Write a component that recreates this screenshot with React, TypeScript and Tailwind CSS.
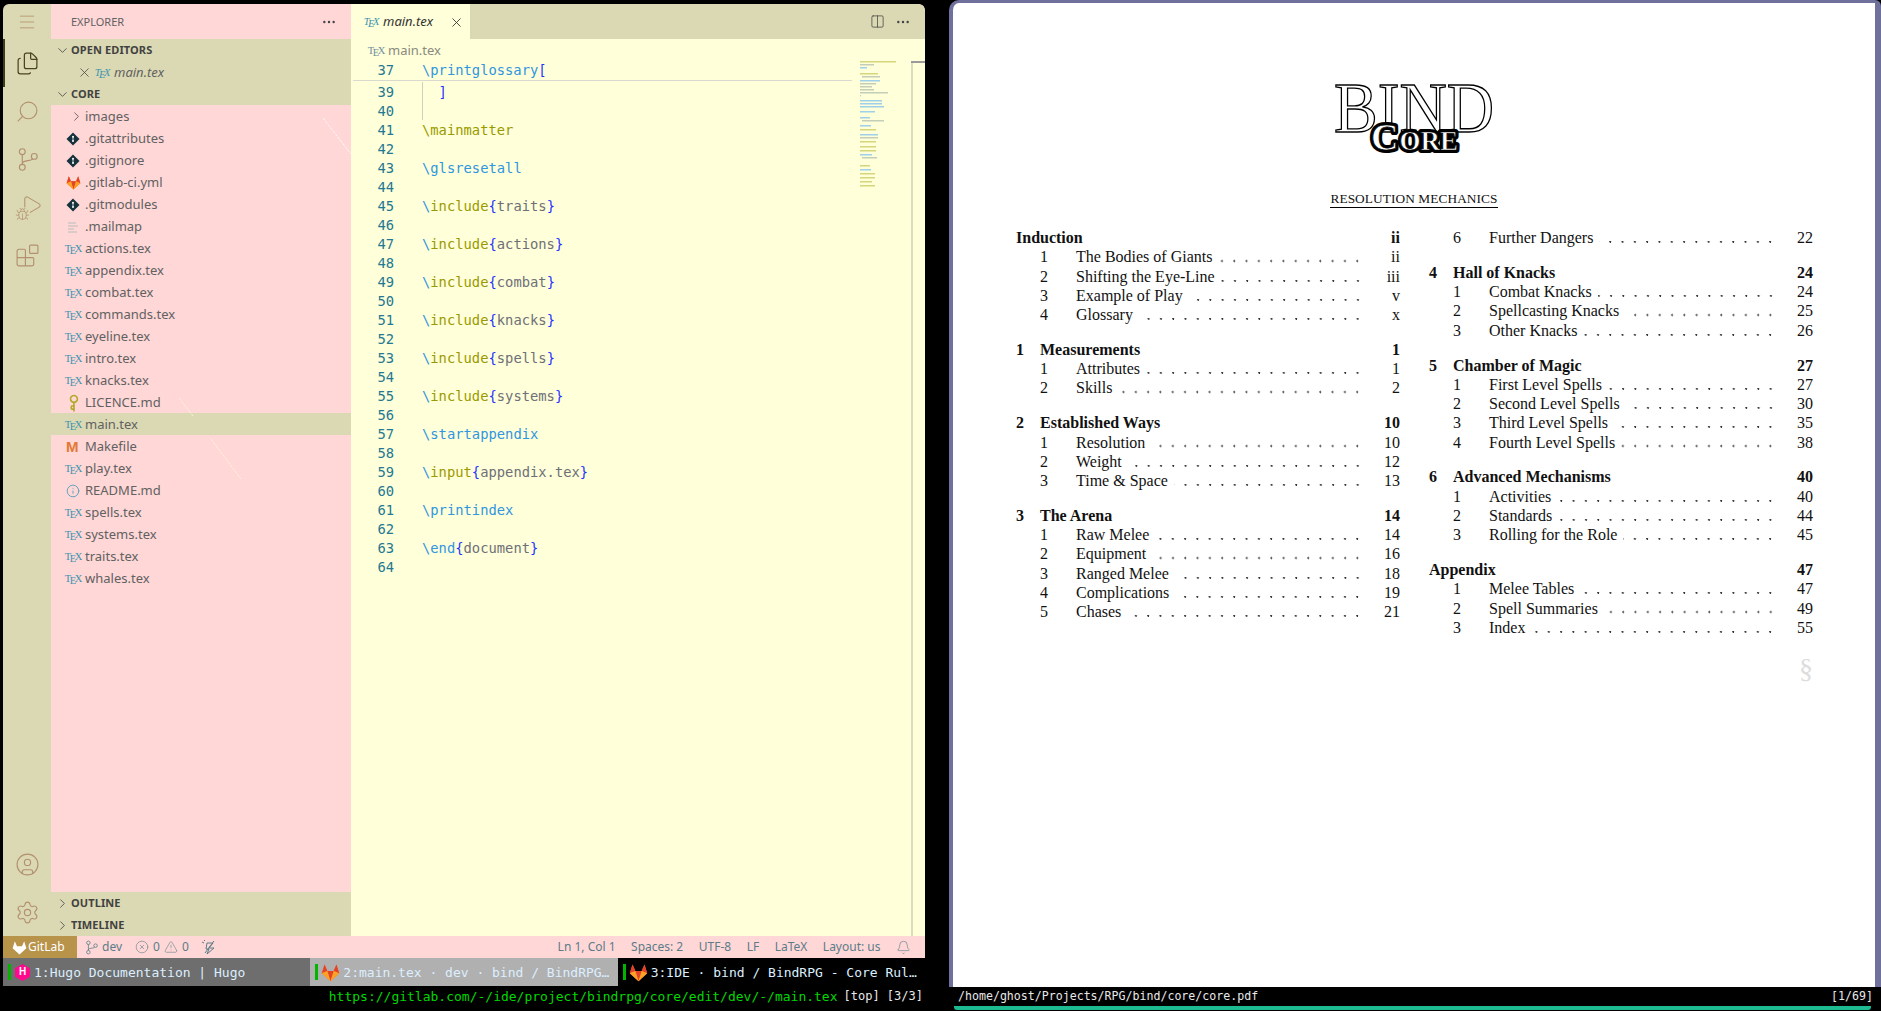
import React from "react";
import { Files, Search, Blocks, CircleUser, Settings, Menu, ChevronDown, ChevronRight, X, Columns2, MoreHorizontal, Bell, CircleX, TriangleAlert, Info, Play, Bug, Key } from "lucide-react";

const Tex = ({ dim }: { dim?: boolean }) => (
  <span className={`inline-flex w-[15px] shrink-0 items-start justify-center font-['Liberation_Serif',serif] text-[10.5px] leading-[10px] ${dim ? "text-[#6f8f9e]" : "text-[#3c93b0]"}`}>
    <span>T</span><span className="relative top-[2px] -mx-[1.5px]">E</span><span>X</span>
  </span>
);

const Fox = ({ s = 18, white }: { s?: number; white?: boolean }) => (
  <svg width={s} height={s} viewBox="0 0 24 24" className="shrink-0">
    <polygon points="12,23 1,13 4.5,2 8,10 16,10 19.5,2 23,13" fill={white ? "#fff" : "#fc6d26"} />
    {!white && <polygon points="12,23 8,10 16,10" fill="#e24329" />}
    {!white && <polygon points="1,13 4.5,2 8,10" fill="#e24329" />}
    {!white && <polygon points="23,13 19.5,2 16,10" fill="#e24329" />}
    {!white && <polygon points="1,13 8,10 12,23" fill="#fca326" />}
    {!white && <polygon points="23,13 16,10 12,23" fill="#fca326" />}
  </svg>
);

const BranchIcon = ({ size = 25, sw = 1.1, className = "" }: { size?: number; sw?: number; className?: string }) => (
  <svg width={size} height={size} viewBox="0 0 24 24" fill="none" stroke="currentColor" strokeWidth={sw} className={className}>
    <circle cx="7" cy="4.5" r="2.8" />
    <circle cx="7" cy="19.5" r="2.8" />
    <circle cx="18.5" cy="9" r="2.8" />
    <path d="M7 7.3v9.4M7 16c0-4 9-2 10-4.6" />
  </svg>
);

const GitIcon = () => (
  <svg width="14" height="14" viewBox="0 0 14 14" className="shrink-0">
    <rect x="2.4" y="2.4" width="9.2" height="9.2" transform="rotate(45 7 7)" fill="#16323c" />
    <circle cx="7" cy="4.8" r="1" fill="#fff" />
    <circle cx="7" cy="9" r="1" fill="#fff" />
    <path d="M7 5v4" stroke="#fff" strokeWidth="0.8" />
  </svg>
);

const MailIcon = () => (
  <svg width="14" height="14" viewBox="0 0 14 14" className="shrink-0">
    <path d="M2 3h8M2 6h10M2 9h6M2 12h9" stroke="#b9bdb9" strokeWidth="1" />
  </svg>
);

type F = { n: string; k: "tex" | "git" | "fox" | "mail" | "key" | "make" | "info" | "dir"; sel?: boolean };
const files: F[] = [
  { n: "images", k: "dir" },
  { n: ".gitattributes", k: "git" },
  { n: ".gitignore", k: "git" },
  { n: ".gitlab-ci.yml", k: "fox" },
  { n: ".gitmodules", k: "git" },
  { n: ".mailmap", k: "mail" },
  { n: "actions.tex", k: "tex" },
  { n: "appendix.tex", k: "tex" },
  { n: "combat.tex", k: "tex" },
  { n: "commands.tex", k: "tex" },
  { n: "eyeline.tex", k: "tex" },
  { n: "intro.tex", k: "tex" },
  { n: "knacks.tex", k: "tex" },
  { n: "LICENCE.md", k: "key" },
  { n: "main.tex", k: "tex", sel: true },
  { n: "Makefile", k: "make" },
  { n: "play.tex", k: "tex" },
  { n: "README.md", k: "info" },
  { n: "spells.tex", k: "tex" },
  { n: "systems.tex", k: "tex" },
  { n: "traits.tex", k: "tex" },
  { n: "whales.tex", k: "tex" },
];

const FileIcon = ({ k }: { k: F["k"] }) => {
  if (k === "tex") return <Tex />;
  if (k === "git") return <GitIcon />;
  if (k === "fox") return <Fox s={15} />;
  if (k === "mail") return <MailIcon />;
  if (k === "key") return <Key size={15} strokeWidth={2.6} className="shrink-0 rotate-[135deg] text-[#b0ab2c]" />;
  if (k === "make") return <span className="w-[14px] shrink-0 font-['Liberation_Sans',sans-serif] text-[15px] font-bold leading-none text-[#e37933]">M</span>;
  if (k === "info") return <Info size={14} strokeWidth={1.5} className="shrink-0 text-[#519aba]" />;
  return <ChevronRight size={15} strokeWidth={1.2} className="ml-[3px] shrink-0 text-[#424242]" />;
};

const iconTan = "text-[#b3906e]";

const ActivityBar = () => (
  <div className="flex w-[48px] shrink-0 flex-col bg-[#dbd9b3]">
    <div className="flex h-[35px] shrink-0 items-center justify-center">
      <Menu size={20} strokeWidth={1} className={iconTan} />
    </div>
    <div className="flex h-[48px] items-center justify-center border-l-2 border-[#3d3d1c] pr-[2px]">
      <Files size={25} strokeWidth={1.2} className="text-[#4a4420]" />
    </div>
    <div className="flex h-[48px] items-center justify-center">
      <Search size={25} strokeWidth={1.1} className={`${iconTan} -scale-x-100`} />
    </div>
    <div className="flex h-[48px] items-center justify-center">
      <BranchIcon className={iconTan} />
    </div>
    <div className="relative flex h-[48px] items-center justify-center">
      <Play size={23} strokeWidth={1.1} className={`${iconTan} ml-[8px] -mt-[4px]`} />
      <Bug size={15} strokeWidth={1.2} className={`${iconTan} absolute left-[12px] top-[24px] rounded-full bg-[#dbd9b3]`} />
    </div>
    <div className="flex h-[48px] items-center justify-center">
      <Blocks size={25} strokeWidth={1.1} className={iconTan} />
    </div>
    <div className="flex-1" />
    <div className="flex h-[48px] items-center justify-center">
      <CircleUser size={25} strokeWidth={1.1} className={iconTan} />
    </div>
    <div className="flex h-[48px] items-center justify-center">
      <Settings size={25} strokeWidth={1.1} className={iconTan} />
    </div>
  </div>
);

const SectionHead = ({ t, open }: { t: string; open?: boolean }) => (
  <div className="flex h-[22px] shrink-0 items-center gap-[1px] bg-[#dbd9b3] pl-[4px] text-[11px] font-bold tracking-[0.1px] text-[#424242]">
    {open ? <ChevronDown size={15} strokeWidth={1.3} className="shrink-0" /> : <ChevronRight size={15} strokeWidth={1.3} className="shrink-0" />}
    <span>{t}</span>
  </div>
);

const SideBar = () => (
  <div className="relative flex w-[300px] shrink-0 flex-col bg-[#ffd7d7] font-['Noto_Sans',sans-serif]">
    <div className="flex h-[35px] shrink-0 items-center justify-between pl-[20px] pr-[14px] pt-[1px] text-[11px] text-[#616161]">
      <span>EXPLORER</span>
      <MoreHorizontal size={16} strokeWidth={1.6} className="text-[#424242]" />
    </div>
    <SectionHead t="OPEN EDITORS" open />
    <div className="flex h-[22px] shrink-0 items-center bg-[#dbd9b3] pl-[26px] pt-[1px] text-[13px] italic text-[#616161]">
      <X size={15} strokeWidth={1.2} className="mr-[3px] shrink-0 text-[#424242]" />
      <Tex />
      <span className="ml-[4px]">main.tex</span>
    </div>
    <SectionHead t="CORE" open />
    <div className="flex-1">
      {files.map((f) => (
        <div key={f.n} className={`flex h-[22px] items-center pl-[15px] pt-[1px] text-[13px] text-[#616161] ${f.sel ? "bg-[#dbd9b3]" : ""}`}>
          <span className="flex w-[19px] shrink-0 items-center"><FileIcon k={f.k} /></span>
          <span>{f.n}</span>
        </div>
      ))}
    </div>
    <SectionHead t="OUTLINE" />
    <SectionHead t="TIMELINE" />
    <svg width="300" height="400" className="pointer-events-none absolute left-0 top-[100px]">
      <path d="M272 14L300 50" stroke="#fff" strokeWidth="0.8" strokeDasharray="3 1" />
      <path d="M128 294L142 312M160 335L190 375" stroke="#fff8d8" strokeWidth="0.8" strokeDasharray="3 1" />
    </svg>
  </div>
);

const c = {
  cmd: "text-[#2f96e0]",
  olive: "text-[#9a9a00]",
  br: "text-[#1f35ff]",
  arg: "text-[#6e7078]",
};

const Inc = ({ cmd, arg, col = "olive" }: { cmd: string; arg: string; col?: "olive" | "cmd" }) => (
  <>
    <span className={c.cmd}>\</span>
    <span className={c[col]}>{cmd}</span>
    <span className={c.br}>{"{"}</span>
    <span className={c.arg}>{arg}</span>
    <span className={c.br}>{"}"}</span>
  </>
);

const Cmd = ({ t, olive }: { t: string; olive?: boolean }) => (
  <span className={olive ? c.olive : c.cmd}>\{t}</span>
);

const code: Record<number, React.ReactNode> = {
  39: <span className={`${c.br} ml-[16.6px]`}>]</span>,
  41: <Cmd t="mainmatter" olive />,
  43: <Cmd t="glsresetall" />,
  45: <Inc cmd="include" arg="traits" />,
  47: <Inc cmd="include" arg="actions" />,
  49: <Inc cmd="include" arg="combat" />,
  51: <Inc cmd="include" arg="knacks" />,
  53: <Inc cmd="include" arg="spells" />,
  55: <Inc cmd="include" arg="systems" />,
  57: <Cmd t="startappendix" />,
  59: <Inc cmd="input" arg="appendix.tex" />,
  61: <Cmd t="printindex" />,
  63: <Inc cmd="end" arg="document" col="cmd" />,
};

const lineNos = Array.from({ length: 26 }, (_, i) => 39 + i);

const O = "#d5d57e";
const B = "#9ed0ea";
const G = "#c4cdb8";
const mini: [number, number, number, string][] = [
  [61, 0, 36, O], [64, 0, 14, G], [67, 0, 7, B],
  [73, 0, 18, O], [76, 2, 18, G], [80, 0, 20, B], [83, 0, 16, G], [86, 0, 12, G],
  [89, 0, 14, G], [92, 0, 28, G], [95, 0, 1, G],
  [100, 0, 22, B], [103, 0, 22, B], [106, 0, 24, B], [111, 0, 15, B], [117, 0, 10, B], [120, 2, 22, G],
  [125, 0, 11, B], [129, 0, 16, O], [134, 0, 18, B], [137, 0, 18, G], [141, 0, 16, O], [146, 0, 16, O], [150, 0, 16, O],
  [154, 0, 12, B], [157, 2, 15, G], [165, 0, 10, O], [169, 0, 11, B],
  [173, 0, 15, O], [177, 0, 15, O], [181, 0, 12, O], [185, 0, 15, O],
];

const Minimap = () => (
  <svg width="40" height="150" className="absolute left-[509px] top-[51px]">
    {mini.map(([y, x, w, col], i) => (
      <rect key={i} x={x} y={y - 55} width={w} height="1.5" fill={col} />
    ))}
  </svg>
);

const Editor = () => (
  <div className="relative flex min-w-0 flex-1 flex-col overflow-hidden rounded-tr-[6px] bg-[#ffffd9]">
    <div className="flex h-[35px] shrink-0 items-center justify-between bg-[#dbd9b3] pr-[14px] font-['Noto_Sans',sans-serif]">
      <div className="flex h-full w-[119px] items-center bg-[#ffffd9] pl-[13px] pt-[1px] text-[13px] italic text-[#333333]">
        <Tex />
        <span className="ml-[4px]">main.tex</span>
        <X size={15} strokeWidth={1.4} className="ml-[16px] text-[#333]" />
      </div>
      <div className="flex items-center gap-[10px] text-[#424242]">
        <Columns2 size={15} strokeWidth={1.2} />
        <MoreHorizontal size={16} strokeWidth={1.6} />
      </div>
    </div>
    <div className="flex h-[22px] shrink-0 items-center pl-[18px] pt-[1px] font-['Noto_Sans',sans-serif] text-[13px] text-[#8a8a80]">
      <Tex dim />
      <span className="ml-[4px]">main.tex</span>
    </div>
    <div className="relative font-['DejaVu_Sans_Mono',monospace] text-[13.8px] leading-[19px]">
      <div className="relative h-[21.5px]">
        <div className="flex h-[19px]">
          <span className="w-[43px] text-right text-[#237893]">37</span>
          <span className="ml-[28px] whitespace-pre">
            <span className={c.cmd}>\printglossary</span>
            <span className={c.br}>[</span>
          </span>
        </div>
        <div className="absolute left-[2px] top-[19px] h-[1px] w-[499px] bg-[#d9d9d0]" />
      </div>
      {lineNos.map((n) => (
        <div key={n} className="flex h-[19px]">
          <span className="w-[43px] text-right text-[#237893]">{n}</span>
          <span className="ml-[28px] whitespace-pre">{code[n]}</span>
        </div>
      ))}
      <div className="absolute left-[71px] top-[21px] h-[38px] w-[1px] bg-[#cfcfc0]" />
    </div>
    <Minimap />
    <div className="absolute bottom-0 left-[560px] top-[57px] w-[2px] bg-[#dcdcbc]" />
    <div className="absolute left-[560px] right-0 top-[57px] h-[2px] bg-[#9a9a9a]" />
  </div>
);

const StatusBar = () => (
  <div className="flex h-[22px] shrink-0 items-center bg-[#ffd7d7] font-['Noto_Sans',sans-serif] text-[12px] text-[#5b7c88]">
    <div className="flex h-full w-[74px] items-center gap-[1px] bg-[#b8934a] pl-[9px] text-white">
      <Fox s={15} white />
      <span>GitLab</span>
    </div>
    <div className="ml-[7px] flex items-center gap-[3px]">
      <BranchIcon size={15} sw={1.3} />
      <span>dev</span>
    </div>
    <div className="ml-[13px] flex items-center gap-[4px]">
      <CircleX size={14} strokeWidth={1} />
      <span>0</span>
      <TriangleAlert size={14} strokeWidth={1} />
      <span>0</span>
    </div>
    <svg width="16" height="16" viewBox="0 0 16 16" className="ml-[12px]" fill="none" stroke="#5b7c88" strokeWidth="1">
      <path d="M3 1l1 1M1 3l2 1M6 4h6l-4 5h5l-7 6 2-5H5z" />
      <path d="M13 2L4 14" />
    </svg>
    <div className="ml-auto flex items-center gap-[15.5px] pr-[14px]">
      <span>Ln 1, Col 1</span>
      <span>Spaces: 2</span>
      <span>UTF-8</span>
      <span>LF</span>
      <span>LaTeX</span>
      <span>Layout: us</span>
      <Bell size={15} strokeWidth={1} />
    </div>
  </div>
);

const HugoIcon = () => (
  <span className="relative ml-[1px] mr-[1px] flex h-[17px] w-[15px] shrink-0 items-center justify-center">
    <svg width="15" height="17" viewBox="0 0 15 17" className="absolute inset-0">
      <polygon points="7.5,0 15,4.2 15,12.8 7.5,17 0,12.8 0,4.2" fill="#ff0a8c" />
    </svg>
    <span className="relative font-['Liberation_Sans',sans-serif] text-[10px] font-bold leading-none text-white">H</span>
  </span>
);

const Tab = ({ bg, text, icon }: { bg: string; text: string; icon: React.ReactNode }) => (
  <div className={`flex h-full w-[307.33px] min-w-0 items-center pl-[5px] ${bg}`}>
    <span className="mr-[3px] h-[16px] w-[3px] shrink-0 bg-[#00b400]" />
    {icon}
    <span className="ml-[3px] truncate pt-[1px]">{text}</span>
  </div>
);

const Tabs = () => (
  <div className="flex h-[28px] shrink-0 items-center font-['DejaVu_Sans_Mono',monospace] text-[13px] text-[#dcefff]">
    <Tab bg="bg-[#6e6e6e]" text="1:Hugo Documentation | Hugo" icon={<HugoIcon />} />
    <Tab bg="bg-[#b0b0b0]" text="2:main.tex · dev · bind / BindRPG…" icon={<Fox s={19} />} />
    <Tab bg="bg-black" text="3:IDE · bind / BindRPG - Core Rul…" icon={<Fox s={19} />} />
  </div>
);

const UrlBar = () => (
  <div className="flex h-[25px] shrink-0 items-start justify-end bg-black pr-[2px] pt-[1px] font-['DejaVu_Sans_Mono',monospace] text-[13px] leading-[19px] text-[#e8e8e8]">
    <span className="text-[#00d800]">https://gitlab.com/-/ide/project/bindrpg/core/edit/dev/-/main.tex</span>
    <span className="ml-[6px] text-[12px]">[top] [3/3]</span>
  </div>
);

const Dots = () => (
  <span className="ml-[6px] h-full min-w-0 flex-1 bg-[radial-gradient(circle_at_6px_14px,#333_0.8px,transparent_1.2px)] bg-[length:12.3px_19.25px] bg-right" />
);

type Sec = { no: string; t: string; p: string; items: [string, string, string][] };

const SecHead = ({ s }: { s: Sec }) => (
  <div className="flex h-[19.25px] items-center font-bold">
    {s.no ? (
      <>
        <span className="w-[24px]">{s.no}</span>
        <span>{s.t}</span>
      </>
    ) : (
      <span>{s.t}</span>
    )}
    <span className="ml-auto">{s.p}</span>
  </div>
);

const Entry = ({ e }: { e: [string, string, string] }) => (
  <div className="flex h-[19.25px] items-center pl-[24px]">
    <span className="w-[36px] shrink-0">{e[0]}</span>
    <span className="shrink-0 whitespace-nowrap">{e[1]}</span>
    <Dots />
    <span className="w-[36px] shrink-0 text-right">{e[2]}</span>
  </div>
);

const left: Sec[] = [
  { no: "", t: "Induction", p: "ii", items: [["1", "The Bodies of Giants", "ii"], ["2", "Shifting the Eye-Line", "iii"], ["3", "Example of Play", "v"], ["4", "Glossary", "x"]] },
  { no: "1", t: "Measurements", p: "1", items: [["1", "Attributes", "1"], ["2", "Skills", "2"]] },
  { no: "2", t: "Established Ways", p: "10", items: [["1", "Resolution", "10"], ["2", "Weight", "12"], ["3", "Time & Space", "13"]] },
  { no: "3", t: "The Arena", p: "14", items: [["1", "Raw Melee", "14"], ["2", "Equipment", "16"], ["3", "Ranged Melee", "18"], ["4", "Complications", "19"], ["5", "Chases", "21"]] },
];
const right: Sec[] = [
  { no: "4", t: "Hall of Knacks", p: "24", items: [["1", "Combat Knacks", "24"], ["2", "Spellcasting Knacks", "25"], ["3", "Other Knacks", "26"]] },
  { no: "5", t: "Chamber of Magic", p: "27", items: [["1", "First Level Spells", "27"], ["2", "Second Level Spells", "30"], ["3", "Third Level Spells", "35"], ["4", "Fourth Level Spells", "38"]] },
  { no: "6", t: "Advanced Mechanisms", p: "40", items: [["1", "Activities", "40"], ["2", "Standards", "44"], ["3", "Rolling for the Role", "45"]] },
  { no: "", t: "Appendix", p: "47", items: [["1", "Melee Tables", "47"], ["2", "Spell Summaries", "49"], ["3", "Index", "55"]] },
];

const CoreText = ({ fill, stroke, sw }: { fill: string; stroke: string; sw: number }) => (
  <text x="47" y="73" fontFamily="'Liberation Serif', serif" fontWeight="700" fill={fill} stroke={stroke} strokeWidth={sw} strokeLinejoin="round">
    <tspan fontSize="38">C</tspan>
    <tspan fontSize="27" dx="1">ORE</tspan>
  </text>
);

const Logo = () => (
  <svg width="180" height="85" viewBox="0 0 180 85" className="block">
    <text x="10" y="55" textLength="160" lengthAdjust="spacingAndGlyphs" fontFamily="'Liberation Serif', serif" fontSize="72" fill="#fff" stroke="#000" strokeWidth="1.4">BIND</text>
    <CoreText fill="#000" stroke="#000" sw={6} />
    <CoreText fill="#fff" stroke="#000" sw={0.7} />
  </svg>
);

const Pdf = () => (
  <div className="flex h-[1011px] w-[932px] shrink-0 flex-col bg-black">
    <div className="flex min-h-0 flex-1 flex-col overflow-hidden rounded-tl-[10px] rounded-tr-[6px] border-x-[4px] border-t-[3px] border-r-[6px] border-[#70709c] bg-white font-['Liberation_Serif',serif] text-[16px] leading-[19px] text-[#111]">
      <div className="relative flex-1">
        <div className="flex flex-col items-center pt-[74px]">
          <Logo />
          <div className="mt-[29px] border-b border-black text-[13.3px] leading-[16px] tracking-[0.1px]">RESOLUTION MECHANICS</div>
        </div>
        <div className="flex gap-[29px] px-[63px] pt-[20px]">
          <div className="flex w-[384px] shrink-0 flex-col gap-[15.6px]">
            {left.map((s) => (
              <div key={s.t}>
                <SecHead s={s} />
                {s.items.map((e) => <Entry key={e[1]} e={e} />)}
              </div>
            ))}
          </div>
          <div className="flex w-[384px] shrink-0 flex-col gap-[15.6px]">
            <div><Entry e={["6", "Further Dangers", "22"]} /></div>
            {right.map((s) => (
              <div key={s.t}>
                <SecHead s={s} />
                {s.items.map((e) => <Entry key={e[1]} e={e} />)}
              </div>
            ))}
          </div>
        </div>
        <div className="absolute left-[846px] top-[650px] text-[28px] leading-[32px] text-[#dddddd]">§</div>
      </div>
    </div>
    <div className="ml-[4px] flex h-[19px] shrink-0 items-center justify-between bg-black pl-[5px] pr-[8px] font-['DejaVu_Sans_Mono',monospace] text-[11.6px] text-[#e8e8e8]">
      <span>/home/ghost/Projects/RPG/bind/core/core.pdf</span>
      <span>[1/69]</span>
    </div>
    <div className="mb-[1px] ml-[5px] mr-[10px] h-[4px] shrink-0 rounded-b-[3px] bg-[#1db990]" />
  </div>
);

export default function App() {
  return (
    <div className="flex h-[1011px] w-[1881px] overflow-hidden bg-black">
      <div className="flex h-full w-[925px] shrink-0 flex-col pl-[3px] pt-[4px]">
        <div className="flex min-h-0 flex-1 overflow-hidden rounded-tl-[6px] rounded-tr-[6px]">
          <ActivityBar />
          <SideBar />
          <Editor />
        </div>
        <StatusBar />
        <Tabs />
        <UrlBar />
      </div>
      <div className="w-[24px] shrink-0" />
      <Pdf />
    </div>
  );
}
